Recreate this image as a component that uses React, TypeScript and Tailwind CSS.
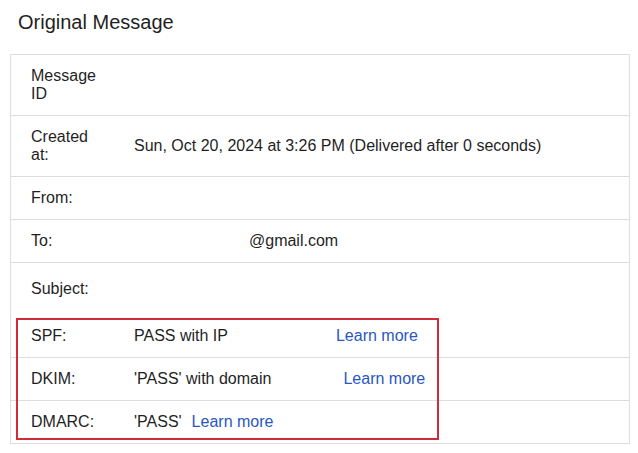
import React from "react";

const Row = ({
  label,
  children,
  className = "",
}: {
  label: string;
  children?: React.ReactNode;
  className?: string;
}) => (
  <div className={`flex border-t border-[#dedede] first:border-t-0 ${className}`}>
    <div className="w-[123px] shrink-0 pl-[20px]">
      <div className="max-w-[72px]">{label}</div>
    </div>
    <div className="flex-1">{children}</div>
  </div>
);

const Link = ({ children, className = "" }: { children: React.ReactNode; className?: string }) => (
  <a href="#" className={`text-[#2857c2] ${className}`}>
    {children}
  </a>
);

export default function App() {
  return (
    <div
      className="w-[638px] h-[453px] bg-white text-[#1f1f1f] overflow-hidden"
      style={{ fontFamily: '"Liberation Sans", Arial, sans-serif' }}
    >
      <h1 className="pt-[10px] pl-[18px] text-[20px] leading-[24px] font-normal">Original Message</h1>
      <div className="mt-[20px] ml-[10px] w-[620px] border border-[#dedede] text-[16px] leading-[18px]">
        <Row label="Message ID" className="py-[12px]" />
        <Row label="Created at:" className="py-[12px] items-center">
          Sun, Oct 20, 2024 at 3:26 PM (Delivered after 0 seconds)
        </Row>
        <Row label="From:" className="py-[12px]" />
        <Row label="To:" className="py-[12px]">
          <span className="pl-[115px]">@gmail.com</span>
        </Row>
        <Row label="Subject:" className="py-[17px]" />
        <div className="relative">
          <Row label="SPF:" className="py-[12px]">
            PASS with IP<Link className="ml-[108px]">Learn more</Link>
          </Row>
          <Row label="DKIM:" className="py-[12px]">
            'PASS' with domain<Link className="ml-[72px]">Learn more</Link>
          </Row>
          <Row label="DMARC:" className="py-[12px]">
            'PASS'<Link className="ml-[10px]">Learn more</Link>
          </Row>
          <div className="absolute top-[3px] bottom-[3px] left-[5px] w-[423px] border-2 border-[#d22b38] pointer-events-none" />
        </div>
      </div>
    </div>
  );
}
